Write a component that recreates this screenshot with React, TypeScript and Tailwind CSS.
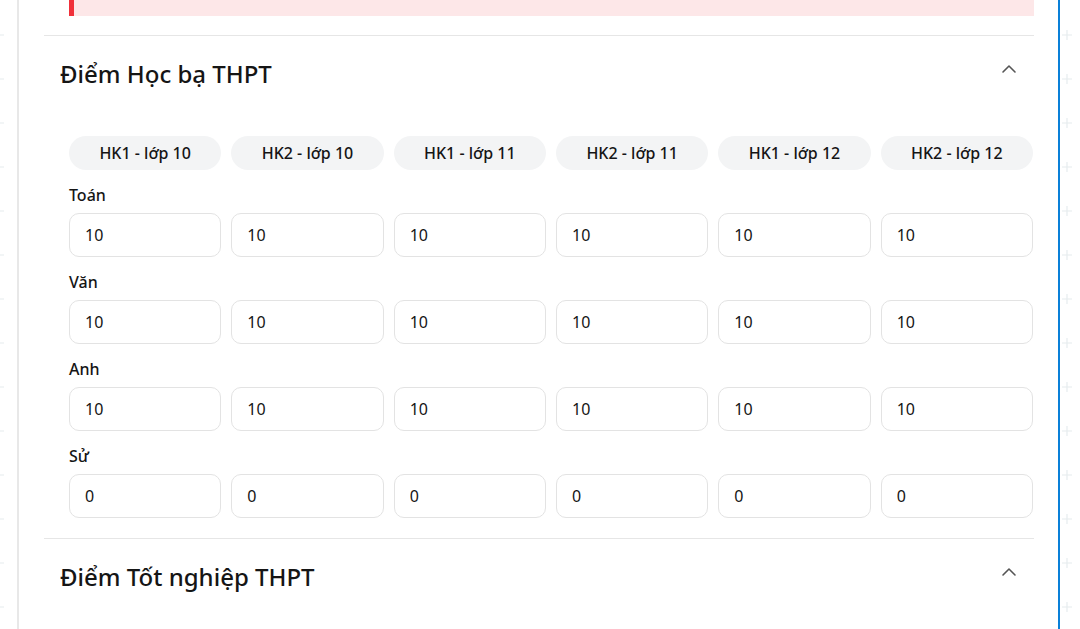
import { ChevronUp } from 'lucide-react'

const terms = ['HK1 - lớp 10', 'HK2 - lớp 10', 'HK1 - lớp 11', 'HK2 - lớp 11', 'HK1 - lớp 12', 'HK2 - lớp 12']

const subjects = [
  { name: 'Toán', scores: ['10', '10', '10', '10', '10', '10'] },
  { name: 'Văn', scores: ['10', '10', '10', '10', '10', '10'] },
  { name: 'Anh', scores: ['10', '10', '10', '10', '10', '10'] },
  { name: 'Sử', scores: ['0', '0', '0', '0', '0', '0'] },
]

// faint "+" grid behind the panel
function PlusPattern({ id, offsetX }: { id: string; offsetX: number }) {
  return (
    <svg className="h-full w-full" aria-hidden="true">
      <defs>
        <pattern id={id} x={offsetX} y={13} width="44" height="44" patternUnits="userSpaceOnUse">
          <path d="M22 17v10M17 22h10" stroke="#e6ecee" strokeWidth="1.2" fill="none" />
        </pattern>
      </defs>
      <rect width="100%" height="100%" fill={`url(#${id})`} />
    </svg>
  )
}

function SectionHeader({ title }: { title: string }) {
  return (
    <div className="flex h-[76px] items-center justify-between border-t border-[#e6e6e6] pl-4 pr-[13px]">
      <h2 className="text-[24px] font-medium leading-8 text-[#151515]">{title}</h2>
      <ChevronUp size={24} strokeWidth={1.6} className="-mt-[10px] text-[#555]" />
    </div>
  )
}

export default function App() {
  return (
    <div
      className="flex h-[629px] w-[1080px] overflow-hidden bg-white text-[#151515]"
      style={{ fontFamily: '"Noto Sans", "Open Sans", Roboto, sans-serif' }}
    >
      <div className="w-[17px] shrink-0">
        <PlusPattern id="plus-left" offsetX={-23} />
      </div>

      <div className="w-[1043px] shrink-0 border-x-2 border-l-[#e8e8e8] border-r-[#0a80d8] bg-white">
        <div className="pl-[25px] pr-[24px]">
          <div className="ml-[25px] h-[16px] border-l-[5px] border-[#f0303a] bg-[#fde7e8]" />
          <div className="h-[19px]" />

          <SectionHeader title="Điểm Học bạ THPT" />
          <div className="pb-[20px] pl-[25px] pr-px pt-[25px]">
            <div className="grid grid-cols-6 gap-[10px]">
              {terms.map(t => (
                <div
                  key={t}
                  className="flex h-[34px] items-center justify-center rounded-full bg-[#f3f4f5] text-[16px] font-medium"
                >
                  {t}
                </div>
              ))}
            </div>
            {subjects.map(s => (
              <div key={s.name}>
                <div className="mb-[6px] mt-[13px] text-[16px] font-medium leading-6">{s.name}</div>
                <div className="grid grid-cols-6 gap-[10px]">
                  {s.scores.map((v, i) => (
                    <input
                      key={i}
                      readOnly
                      value={v}
                      className="h-[44px] w-full rounded-[10px] border border-[#e3e3e3] bg-white px-[15px] text-[16px] text-[#151515] outline-none"
                    />
                  ))}
                </div>
              </div>
            ))}
          </div>

          <SectionHeader title="Điểm Tốt nghiệp THPT" />
        </div>
      </div>

      <div className="w-[20px] shrink-0">
        <PlusPattern id="plus-right" offsetX={-15} />
      </div>
    </div>
  )
}
